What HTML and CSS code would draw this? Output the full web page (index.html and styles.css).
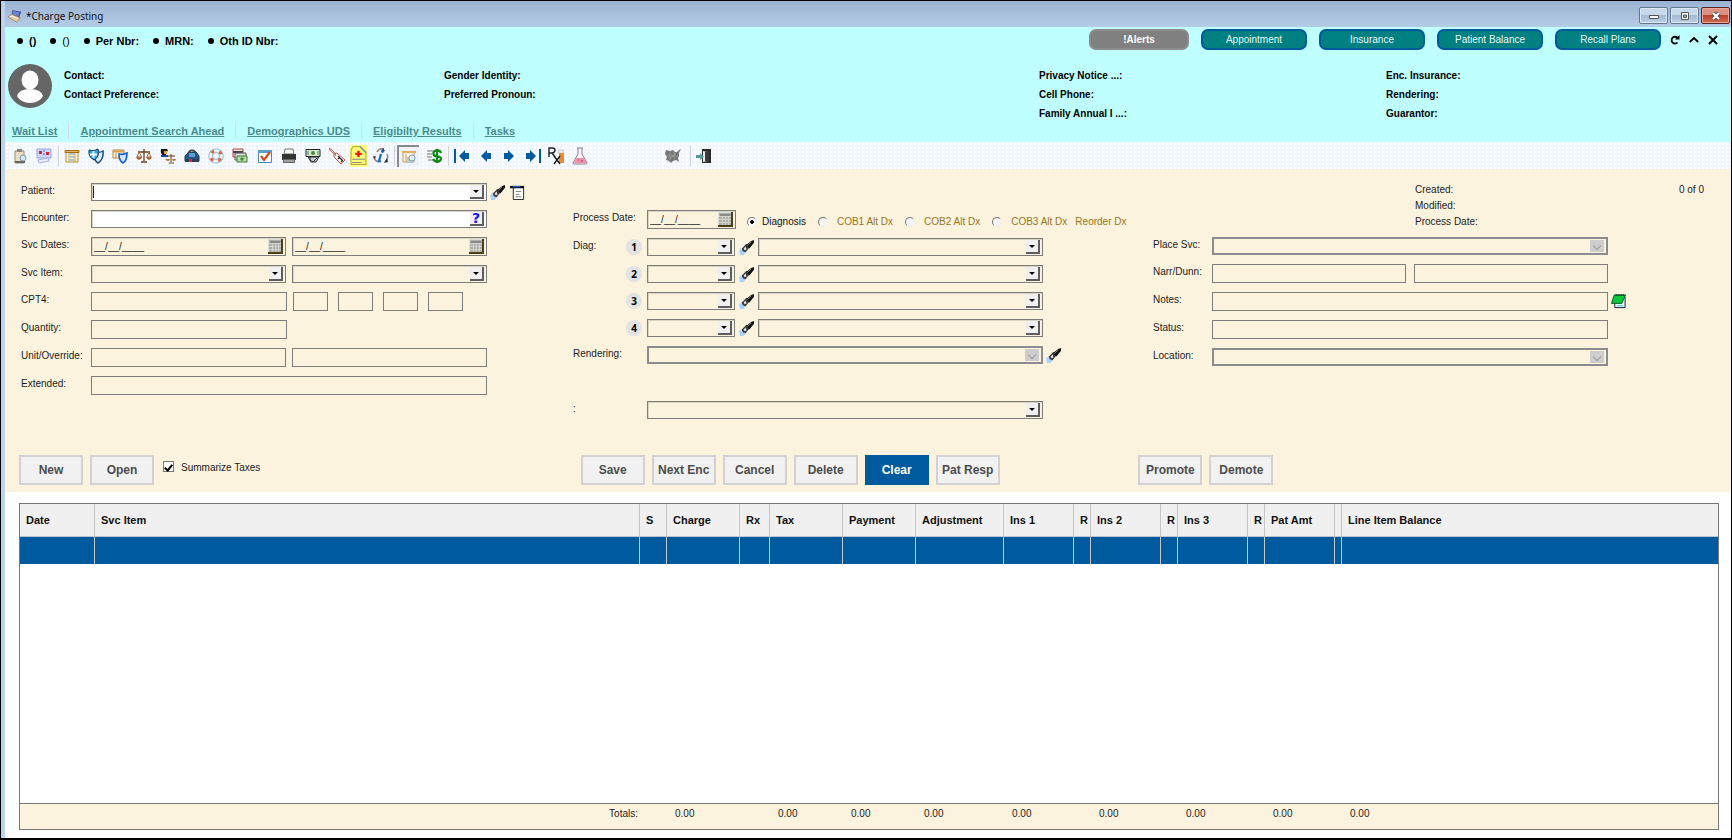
FILE: index.html
```html
<!DOCTYPE html>
<html lang="en">
<head>
<meta charset="utf-8">
<title>Charge Posting</title>
<link rel="stylesheet" href="styles.css">
</head>
<body>
<svg class="sprite" aria-hidden="true">
  <symbol id="torch" viewBox="0 0 16 16"><path d="M0 11l4-3 4 4-3 4H1z" fill="#acd2fa"/><path d="M3 9l5-5 4 3-5 6-3-1z" fill="#3a3a3a"/><path d="M5 9l2-2 1 3-2 1z" fill="#e8e8e8"/><path d="M8 5l5-4 3-1v3l-5 6z" fill="#111"/><path d="M9 6l4-4" stroke="#888"/></symbol>
  <symbol id="calendar" viewBox="0 0 12 12"><path fill="#b0b0aa" d="M0 0h12v12H0z"/><path fill="#8a8a86" d="M1 1h10v2H1z"/><path fill="none" stroke="#d8d8d2" stroke-width=".8" d="M0 3.500h12M0 6.500h12M0 9.500h12M3.500 3v9M6.500 3v9M9.500 3v9"/></symbol>
</svg>
<div class="window">
  <header class="titlebar">
    <svg class="icon16" viewBox="0 0 16 16"><path d="M5 1l10 2-2 6-9-1z" fill="#3f4f9c"/><path d="M6 2l7 2-1 4-7-1z" fill="#6f86c8"/><path d="M0 9l4-3 10 4-4 5z" fill="#e7c9a0" stroke="#8a6a50" stroke-width=".7"/><path d="M2 9l3-1 6 3" stroke="#fff" fill="none"/></svg>
    <h1 class="title">*Charge Posting</h1>
    <div class="window-buttons">
      <button class="winbtn" aria-label="Minimize"><svg viewBox="0 0 12 10"><path d="M1.500 4.500h9v3h-9z" fill="#fff" stroke="#555"/></svg></button>
      <button class="winbtn" aria-label="Restore"><svg viewBox="0 0 12 10"><path d="M2.500 1.500h7v7h-7z" fill="#fff" stroke="#555"/><path d="M4.500 4h3v2.500h-3z" fill="#9ab" stroke="#555"/></svg></button>
      <button class="winbtn close" aria-label="Close"><svg viewBox="0 0 12 10"><path d="M3 2l6 6M9 2L3 8" stroke="#444" stroke-width="4"/><path d="M3 2l6 6M9 2L3 8" stroke="#fff" stroke-width="2.400"/></svg></button>
    </div>
  </header>

  <section class="patient-banner">
    <div class="banner-top">
      <ul class="ids">
        <li>()</li><li class="plain">()</li><li>Per Nbr:</li><li>MRN:</li><li>Oth ID Nbr:</li>
      </ul>
      <div class="pills">
        <button class="pill alert">!Alerts</button>
        <button class="pill">Appointment</button>
        <button class="pill">Insurance</button>
        <button class="pill">Patient Balance</button>
        <button class="pill">Recall Plans</button>
      </div>
      <div class="banner-tools">
        <button class="bare" aria-label="Refresh"><svg viewBox="0 0 10 10"><path d="M7.500 7.500A3.400 3.400 0 1 1 7.500 2.800" fill="none" stroke="#000" stroke-width="1.800"/><path d="M9.500 0v4.600H5z"/></svg></button>
        <button class="bare" aria-label="Collapse"><svg viewBox="0 0 10 10"><path d="M.8 7L5 3l4.200 4" fill="none" stroke="#000" stroke-width="1.800"/></svg></button>
        <button class="bare" aria-label="Dismiss"><svg viewBox="0 0 10 10"><path d="M1 1l8 8M9 1L1 9" stroke="#000" stroke-width="2"/></svg></button>
      </div>
    </div>
    <div class="banner-info">
      <svg class="avatar" viewBox="0 0 44 44"><circle cx="22" cy="22" r="22" fill="#666"/><ellipse cx="22" cy="16" rx="8.500" ry="9.500" fill="#fff"/><path d="M9 32q2-7 13-7t13 7q-4 7-13 7T9 32z" fill="#fff"/></svg>
      <div class="facts"><span>Contact:</span><span>Contact Preference:</span></div>
      <div class="facts"><span>Gender Identity:</span><span>Preferred Pronoun:</span></div>
      <div class="facts"><span>Privacy Notice ...:</span><span>Cell Phone:</span><span>Family Annual I ...:</span></div>
      <div class="facts"><span>Enc. Insurance:</span><span>Rendering:</span><span>Guarantor:</span></div>
    </div>
    <nav class="links">
      <a href="#wait">Wait List</a><a href="#search">Appointment Search Ahead</a><a href="#uds">Demographics UDS</a><a href="#elig">Eligibilty Results</a><a href="#tasks">Tasks</a>
    </nav>
  </section>

  <div class="toolbar" role="toolbar" aria-label="Charge tools">
    <div class="tools pair">
      <button class="tool" aria-label="Clipboard"><svg viewBox="0 0 16 16"><path d="M3 3h9v12H3z" fill="#e9dfc8" stroke="#9b8a68"/><path d="M5 1h5v3H5z" fill="#888"/><path d="M3 14h10" stroke="#666" stroke-width="2"/><circle cx="11" cy="10" r="3" fill="#cfe9f2" stroke="#89a"/></svg></button>
      <button class="tool" aria-label="Schedule"><svg viewBox="0 0 16 16"><path d="M1 1h14v9H1z" fill="#cfd8fa" stroke="#92a4e4"/><path d="M3 3h3v3H3zM10 4h3v3h-3z" fill="#d3203c"/><path d="M7 3h2M7 6h2" stroke="#3568dc"/><path d="M2 12l10-2 1 3-10 2z" fill="#eef" stroke="#a8aee0"/></svg></button>
    </div>
    <span class="sep"></span>
    <div class="tools main">
      <button class="tool" aria-label="Chart"><svg viewBox="0 0 16 16"><path d="M2 4h12v10H2z" fill="#fff7df" stroke="#b58a3c"/><path d="M1 2.500h14v2H1z" fill="#e6b45a" stroke="#a66c1a"/><path d="M5 5v9M11 5v9" stroke="#c79a4a"/><path d="M6 6h4M6 9h4M6 12h4" stroke="#5590b8"/></svg></button>
      <button class="tool" aria-label="Coverage"><svg viewBox="0 0 16 16"><path d="M7 4q5 1 8-1 1 8-5 12-5-3-4-11z" fill="#dceeff" stroke="#174a80" stroke-width="1.500"/><path d="M1 2q5 2 9-1 2 8-4 11-6-3-5-10z" fill="#2aa6ee" stroke="#15365f"/><path d="M5.500 3v7M2 6.500h7" stroke="#fff" stroke-width="1.800"/></svg></button>
      <button class="tool" aria-label="Chart coverage"><svg viewBox="0 0 16 16"><path d="M1 2h11v8H1z" fill="#fff3d4" stroke="#b58a3c"/><path d="M1 2.500h11v2H1z" fill="#d9a048"/><path d="M4 5v5" stroke="#b58a3c"/><path d="M7 6q4 1 8-1 0 8-4 10-4-2-4-9z" fill="#cfe8ff" stroke="#1458d8" stroke-width="1.600"/></svg></button>
      <button class="tool" aria-label="Balance"><svg viewBox="0 0 16 16"><path d="M8 1v12M2 4h12M5 14h6" stroke="#6b3f16" stroke-width="1.300"/><path d="M3 4L1 9h5zM13 4l-2 5h4z" fill="none" stroke="#9a6b38"/><path d="M0 9h6q-1 3-3 3T0 9zM10 9h6q-1 3-3 3t-3-3z" fill="#a56b36"/></svg></button>
      <button class="tool" aria-label="Guarantor balance"><svg viewBox="0 0 16 16"><path d="M1 1h6l1 2-2 1v3H2q-2-3-1-6z" fill="#161616"/><path d="M4 3h3v3H4z" fill="#e0a040"/><path d="M1 7h7v2H1z" fill="#2740b8"/><path d="M11 6v8M7 8h8M9 15h5" stroke="#6b3f16"/><path d="M5 11h5q0 2-2 2t-3-2zM12 11h4q0 2-2 2t-2-2z" fill="#b07a3c"/></svg></button>
      <button class="tool" aria-label="Case"><svg viewBox="0 0 16 16"><path d="M4 5q4-6 8 0" fill="none" stroke="#444" stroke-width="1.500"/><path d="M1 13V8l4-4h7l3 4v5z" fill="#245789" stroke="#2b3442"/><path d="M5 5h6v4H5z" fill="#5aa0d0"/><path d="M1 11h14v3H1z" fill="#2c3f58"/><path d="M5 11h3v3H5z" fill="#e02828"/></svg></button>
      <button class="tool" aria-label="Help desk"><svg viewBox="0 0 16 16"><circle cx="8" cy="8" r="5.300" fill="none" stroke="#6bb4d6" stroke-width="4.600"/><circle cx="8" cy="8" r="5.300" fill="none" stroke="#f4f8fb" stroke-width="3"/><circle cx="8" cy="8" r="5.300" fill="none" stroke="#e8643c" stroke-width="3" stroke-dasharray="3 5.325" stroke-dashoffset="5.600"/></svg></button>
      <button class="tool" aria-label="Payments"><svg viewBox="0 0 16 16"><path d="M1 1h10v8H1z" fill="#f4dcd8" stroke="#b44"/><path d="M1 3h10v2H1z" fill="#444"/><path d="M3 5h11v7H3z" fill="#ddd" stroke="#555"/><path d="M5 8h10v6H5z" fill="#b6ddaa" stroke="#3c7a32"/><circle cx="10" cy="11" r="1.800" fill="#4a9040"/></svg></button>
      <button class="tool" aria-label="Tasks"><svg viewBox="0 0 16 16"><path d="M1.500 2.500h13v12h-13z" fill="#fff" stroke="#4b88b8"/><path d="M1 2h14v3H1z" fill="#58a0d2"/><path d="M4 8l3 4 6-8" fill="none" stroke="#d0481c" stroke-width="2.200"/></svg></button>
      <button class="tool" aria-label="Print"><svg viewBox="0 0 16 16"><path d="M4 1h8l1 5H3z" fill="#f4f4f4" stroke="#777"/><path d="M1 6h14v6H1z" fill="#333"/><path d="M2 11h12v4H2z" fill="#666"/><path d="M3 13h10" stroke="#ddd"/></svg></button>
      <button class="tool" aria-label="Bills"><svg viewBox="0 0 16 16"><path d="M1 1.500h14v7H1z" fill="#d7ead0" stroke="#222"/><circle cx="8" cy="5" r="2" fill="#498a42"/><path d="M3 3v4M13 3v4" stroke="#498a42"/><path d="M3 9h11l-3 5H6z" fill="#c8ccd0" stroke="#333"/><path d="M5 9v3l3 2 4-4" fill="none" stroke="#333"/></svg></button>
      <button class="tool" aria-label="Price tag"><svg viewBox="0 0 16 16"><path d="M5 6l3-1 8 7-4 4-7-7z" fill="#fff" stroke="#c8564c"/><path d="M7 8Q6 3 0 0q0 3 6 6" fill="none" stroke="#a8654a"/><path d="M9 8l4 4M9 11l2-2M12 14l2-2" stroke="#222" stroke-width="1.300"/></svg></button>
      <button class="tool yellow" aria-label="Medical note"><svg viewBox="0 0 16 19"><path d="M3 1h7l5 5v12H1V4z" fill="#fffb76" stroke="#b6ab38"/><path d="M9 1l6 6" stroke="#6f96b0"/><path d="M8 5v6M5 8h6" stroke="#e81818" stroke-width="2.200"/><path d="M2 13h12M2 16h9" stroke="#888"/></svg></button>
      <button class="tool" aria-label="Reference"><svg viewBox="0 0 16 16"><path d="M4 4Q6 0 11 1M14 6q2 5-2 8M1 8q0 5 5 6" fill="none" stroke="#888" stroke-width="1.500"/><path d="M10 0l2 3-4 1zM0 9l3-1-1 3zM11 15l4-1-1-4z" fill="#333"/><path d="M8 6l-2 7 2 .5" fill="none" stroke="#1d66bd" stroke-width="2.200"/><circle cx="9.500" cy="3.500" r="1.400" fill="#1d66bd"/></svg></button>
    </div>
    <span class="sep"></span>
    <div class="tools charge">
      <button class="tool pressed" aria-label="Charge view"><svg viewBox="0 0 16 16"><path d="M2 3h11v10H2z" fill="#fff7df" stroke="#c39b58"/><path d="M1 2h14v2H1z" fill="#e0ae62"/><path d="M5 5v8" stroke="#c39b58"/><path d="M6 8h6v6H6z" fill="#b6cad8"/><circle cx="11" cy="9" r="3" fill="#dff2fa" stroke="#7f9db4"/></svg></button>
      <button class="tool" aria-label="Money"><svg viewBox="0 0 16 16"><path d="M0 3h6M0 6h5M0 9h5M1 12h5" stroke="#777"/><path d="M14 5Q13 2 9.500 2.500T6.500 6q0 2 4 2.500T14 11q-1 3-4 2.500T6 11M10 1v14" fill="none" stroke="#0c8a14" stroke-width="2.300"/></svg></button>
    </div>
    <span class="sep"></span>
    <div class="tools travel">
      <button class="tool" aria-label="First"><svg viewBox="0 0 16 16"><path fill="#005a9e" d="M0 1h2v14H0zM15 5h-4V2L5 8l6 6v-3h4z"/></svg></button>
      <button class="tool" aria-label="Previous"><svg viewBox="0 0 16 16"><path fill="#005a9e" d="M13 5H9V2L3 8l6 6v-3h4z"/></svg></button>
      <button class="tool" aria-label="Next"><svg viewBox="0 0 16 16"><path fill="#005a9e" d="M3 5h4V2l6 6-6 6v-3H3z"/></svg></button>
      <button class="tool" aria-label="Last"><svg viewBox="0 0 16 16"><path fill="#005a9e" d="M14 1h2v14h-2zM1 5h4V2l6 6-6 6v-3H1z"/></svg></button>
      <button class="tool" aria-label="Prescriptions"><svg viewBox="0 0 16 18"><path d="M11 5h5v11h-5z" fill="#e88a34"/><path d="M10 3h6v3h-6z" fill="#f2eee6" stroke="#aaa" stroke-width=".5"/><path d="M1 10V1h3.500q2.500 0 2.500 2.300T4.500 6H1M4 6l3 4" fill="none" stroke="#222" stroke-width="1.400"/><path d="M6 9l6 8M12 9l-6 8" stroke="#111" stroke-width="1.300"/></svg></button>
      <button class="tool" aria-label="Lab"><svg viewBox="0 0 16 18"><path d="M5 1h6M6 1v6L1 16q0 1 1 1h12q1 0 1-1L10 7V1" fill="#f8f4f8" stroke="#8c8088"/><path d="M4.500 11h7l3 5H2z" fill="#f08cac"/><path d="M6 13h1M9 14h2" stroke="#c2386c"/></svg></button>
    </div>
    <div class="tools map">
      <button class="tool" aria-label="Map"><svg viewBox="0 0 16 16"><path d="M1 2l4 1 3-1 2 2 2 0 4-3-2 4 0 3-1 2 1 4-3-2-3 1-2 2-2-2-3-1 1-3-2-3z" fill="#777"/><path d="M2 14L15 1M1 8h12M5 3v9M9 3v9" stroke="#aaa" stroke-width=".6"/></svg></button>
    </div>
    <span class="sep"></span>
    <button class="tool" aria-label="Exit"><svg viewBox="0 0 16 16"><path d="M6 1h9v14H6z" fill="#2b2b2b"/><path d="M7 3l5 1v9l-5 1z" fill="#eee"/><path d="M9 4l4-2v12l-4-1z" fill="#3a3a3a"/><path d="M0 7h4V5l4 3.500L4 12v-2H0z" fill="#5c9a9c"/></svg></button>
  </div>

  <main class="charge-form">
    <div class="form-grid">
      <div class="col left">
        <div class="row"><label class="lbl" for="patient">Patient:</label>
          <div class="fields"><div class="combo white"><i class="caret"></i><input id="patient" type="text"><button class="drop" aria-label="Open patient list"></button></div></div>
          <button class="bare side" aria-label="Find patient"><svg><use href="#torch"/></svg></button>
          <button class="bare side note" aria-label="Patient menu"><svg viewBox="0 0 16 16"><path d="M3.500 1.500h11v14h-11z" fill="#fff" stroke="#222"/><path d="M0 1h15v2.500H0z" fill="#111"/><path d="M3 1h8v1.500H3z" fill="#1d54c8"/><path d="M6 7h6M6 10h4M6 12.500h6" stroke="#777"/></svg></button></div>
        <div class="row"><label class="lbl" for="enc">Encounter:</label>
          <div class="fields"><div class="combo white"><input id="enc" type="text"><button class="drop ask">?</button></div></div></div>
        <div class="row"><label class="lbl" for="d1">Svc Dates:</label>
          <div class="fields"><div class="combo date"><input id="d1" type="text" value="__/__/____"><button class="cal" aria-label="Pick start"><svg><use href="#calendar"/></svg></button></div>
          <div class="combo date"><input type="text" aria-label="End date" value="__/__/____"><button class="cal" aria-label="Pick end"><svg><use href="#calendar"/></svg></button></div></div></div>
        <div class="row"><label class="lbl" for="item">Svc Item:</label>
          <div class="fields"><div class="combo"><select id="item"><option></option></select><i class="drop"></i></div><div class="combo"><select aria-label="Item description"><option></option></select><i class="drop"></i></div></div></div>
        <div class="row"><label class="lbl" for="cpt">CPT4:</label>
          <div class="fields"><input id="cpt" class="box" type="text"><div class="mods"><input class="box" aria-label="Modifier 1"><input class="box" aria-label="Modifier 2"><input class="box" aria-label="Modifier 3"><input class="box" aria-label="Modifier 4"></div></div></div>
        <div class="row"><label class="lbl" for="qty">Quantity:</label>
          <div class="fields"><input id="qty" class="box" type="text"><span class="blank"></span></div></div>
        <div class="row"><label class="lbl" for="unit">Unit/Override:</label>
          <div class="fields"><input id="unit" class="box" type="text"><input class="box" type="text" aria-label="Override"></div></div>
        <div class="row"><label class="lbl" for="ext">Extended:</label>
          <div class="fields"><input id="ext" class="box" type="text"></div></div>
      </div>

      <div class="col middle">
        <div class="row first"><label class="lbl" for="pd">Process Date:</label>
          <div class="combo date short"><input id="pd" type="text" value="__/__/____"><button class="cal" aria-label="Pick process date"><svg><use href="#calendar"/></svg></button></div>
          <div class="radios">
            <label class="on"><input type="radio" name="dx" checked>Diagnosis</label>
            <label><input type="radio" name="dx">COB1 Alt Dx</label>
            <label><input type="radio" name="dx">COB2 Alt Dx</label>
            <label><input type="radio" name="dx">COB3 Alt Dx</label>
            <span>Reorder Dx</span>
          </div></div>
        <div class="row"><label class="lbl" for="g1">Diag:</label><b class="num">1</b>
          <div class="fields diag"><div class="combo code"><select id="g1"><option></option></select><i class="drop"></i></div><button class="bare" aria-label="Find diagnosis 1"><svg><use href="#torch"/></svg></button><div class="combo"><select aria-label="Diagnosis 1"><option></option></select><i class="drop"></i></div></div></div>
        <div class="row"><span class="lbl"></span><b class="num">2</b>
          <div class="fields diag"><div class="combo code"><select aria-label="Code 2"><option></option></select><i class="drop"></i></div><button class="bare" aria-label="Find diagnosis 2"><svg><use href="#torch"/></svg></button><div class="combo"><select aria-label="Diagnosis 2"><option></option></select><i class="drop"></i></div></div></div>
        <div class="row"><span class="lbl"></span><b class="num">3</b>
          <div class="fields diag"><div class="combo code"><select aria-label="Code 3"><option></option></select><i class="drop"></i></div><button class="bare" aria-label="Find diagnosis 3"><svg><use href="#torch"/></svg></button><div class="combo"><select aria-label="Diagnosis 3"><option></option></select><i class="drop"></i></div></div></div>
        <div class="row"><span class="lbl"></span><b class="num">4</b>
          <div class="fields diag"><div class="combo code"><select aria-label="Code 4"><option></option></select><i class="drop"></i></div><button class="bare" aria-label="Find diagnosis 4"><svg><use href="#torch"/></svg></button><div class="combo"><select aria-label="Diagnosis 4"><option></option></select><i class="drop"></i></div></div></div>
        <div class="row"><label class="lbl" for="rend">Rendering:</label>
          <div class="fields"><div class="combo off"><select id="rend" disabled><option></option></select><i class="chev"></i></div></div><button class="bare side" aria-label="Find rendering"><svg><use href="#torch"/></svg></button></div>
        <div class="row extra"><label class="lbl" for="x">:</label>
          <div class="fields"><div class="combo"><select id="x"><option></option></select><i class="drop"></i></div></div></div>
      </div>

      <div class="col right">
        <div class="audit"><div class="stamps"><span>Created:</span><span>Modified:</span><span>Process Date:</span></div><span>0 of 0</span></div>
        <div class="row"><label class="lbl" for="pos">Place Svc:</label><div class="fields"><div class="combo off"><select id="pos" disabled><option></option></select><i class="chev"></i></div></div></div>
        <div class="row"><label class="lbl" for="nar">Narr/Dunn:</label><div class="fields wide"><input id="nar" class="box" type="text"><input class="box" type="text" aria-label="Dunning"></div></div>
        <div class="row"><label class="lbl" for="notes">Notes:</label><div class="fields"><input id="notes" class="box" type="text"></div>
          <button class="bare side" aria-label="Open notes"><svg viewBox="0 0 16 16"><path d="M4 3h11v11.500H4z" fill="#e8fbff" stroke="#113"/><path d="M3.500 1h12l-4 9H.5z" fill="#08c840" stroke="#052"/><path d="M5 1h10" stroke="#111" stroke-width="1.500" stroke-dasharray="1 1"/><path d="M6 12.500h7" stroke="#4bb"/></svg></button></div>
        <div class="row"><label class="lbl" for="st">Status:</label><div class="fields"><input id="st" class="box" type="text"></div></div>
        <div class="row"><label class="lbl" for="loc">Location:</label><div class="fields"><div class="combo off"><select id="loc" disabled><option></option></select><i class="chev"></i></div></div></div>
      </div>
    </div>

    <div class="actions">
      <div class="group"><button class="btn">New</button><button class="btn">Open</button><label class="tick"><input type="checkbox" checked>Summarize Taxes</label></div>
      <div class="group"><button class="btn">Save</button><button class="btn">Next Enc</button><button class="btn">Cancel</button><button class="btn">Delete</button><button class="btn primary">Clear</button><button class="btn">Pat Resp</button></div>
      <div class="group"><button class="btn">Promote</button><button class="btn">Demote</button></div>
    </div>
  </main>

  <section class="ledger">
    <table>
      <colgroup><col class="w75"><col><col class="w27"><col class="w73"><col class="w30"><col class="w73"><col class="w73"><col class="w88"><col class="w70"><col class="w17"><col class="w70"><col class="w17"><col class="w70"><col class="w17"><col class="w70"><col class="w7"><col class="w376"></colgroup>
      <thead><tr><th>Date</th><th>Svc Item</th><th>S</th><th>Charge</th><th>Rx</th><th>Tax</th><th>Payment</th><th>Adjustment</th><th>Ins 1</th><th>R</th><th>Ins 2</th><th>R</th><th>Ins 3</th><th>R</th><th>Pat Amt</th><th></th><th>Line Item Balance</th></tr></thead>
      <tbody>
        <tr class="current"><td></td><td></td><td></td><td></td><td></td><td></td><td></td><td></td><td></td><td></td><td></td><td></td><td></td><td></td><td></td><td></td><td></td></tr>
        <tr class="filler"><td colspan="17"></td></tr>
      </tbody>
      <tfoot><tr><td></td><td class="totals">Totals:</td><td></td><td>0.00</td><td></td><td>0.00</td><td>0.00</td><td>0.00</td><td>0.00</td><td></td><td>0.00</td><td></td><td>0.00</td><td></td><td>0.00</td><td></td><td>0.00</td></tr></tfoot>
    </table>
  </section>
</div>
</body>
</html>
```
FILE: styles.css
```css
* { box-sizing: border-box; }
body {
  margin: 0;
  font: 10px/16px "Liberation Sans", Arial, sans-serif;
  color: #1c1c1c;
}
button, input, select { font: inherit; color: inherit; margin: 0; padding: 0; }
.sprite { display: none; }
.window {
  display: flex;
  flex-direction: column;
  min-height: 100vh;
  border: 1px solid #000;
  border-width: 1px 1px 2px;
  padding-left: 4px;
  background: #bdd2ec;
}

/* Title bar */
.titlebar {
  display: flex;
  align-items: center;
  gap: 4px;
  height: 26px;
  padding: 3px 1px 0 3px;
  background: linear-gradient(#9ab3d2, #b5cce6);
}
.icon16 { width: 14px; height: 14px; }
.title { flex: 1; margin: 0; font: 10px/16px "Noto Sans", "Open Sans", sans-serif; color: #111; }
.window-buttons { display: flex; gap: 2px; }
.winbtn {
  display: grid;
  place-items: center;
  width: 29px;
  height: 17px;
  border: 1px solid #66788f;
  border-radius: 2px;
  background: linear-gradient(#c8d9ec 45%, #a3bad3 50%, #bdd0e6);
  box-shadow: inset 0 0 0 1px #dbe7f4;
}
.winbtn svg { width: 12px; height: 10px; }
.winbtn.close { border-color: #5c2420; background: linear-gradient(#dc9183 45%, #bd3f28 50%, #d06c50); box-shadow: inset 0 0 0 1px #e6ab9f; }

/* Patient banner */
.patient-banner { background: #c0ffff; color: #000; height: 115px; }
.banner-top { display: flex; align-items: flex-start; height: 30px; }
.ids { display: flex; flex: 1; gap: 14px; margin: 6px 0 0 12px; padding: 0; list-style: none; font: bold 11px/16px "Liberation Sans", Arial, sans-serif; }
.ids li { display: flex; align-items: center; gap: 6px; }
.ids li::before { content: ""; width: 6px; height: 6px; border-radius: 50%; background: #000; }
.ids .plain { font-weight: normal; }
.pills { display: flex; gap: 12px; padding-top: 2px; }
.pill {
  width: 106px;
  height: 21px;
  border: 2px solid #00589c;
  border-radius: 7px;
  background: #008080;
  color: #e8f8f8;
}
.pill.alert { width: 100px; border-color: #8c8c8c; background: #808080; color: #fff; font-weight: bold; }
.banner-tools { display: flex; gap: 9px; padding: 8px 13px 0 9px; }
.bare { display: block; border: 0; background: none; line-height: 0; }
.banner-tools svg { width: 10px; height: 10px; }
.banner-info {
  display: grid;
  grid-template-columns: 56px 380fr 595fr 347fr 345fr;
  padding: 7px 0 0 3px;
  align-items: start;
  height: 66px;
  font-weight: bold;
}
.avatar { width: 44px; height: 44px; }
.facts { display: flex; flex-direction: column; gap: 3px; padding-top: 4px; }
.links { display: flex; padding: 0 7px; font: bold 11px/16px "Liberation Sans", Arial, sans-serif; }
.links a { color: #4a8a8c; }
.links a + a { margin-left: 11px; padding-left: 11px; border-left: 1px solid #d4dce4; }

/* Toolbar */
.toolbar {
  display: flex;
  align-items: center;
  height: 27px;
  padding-left: 4px;
  background-color: #f1f5fe;
  background-image: radial-gradient(#fff 1px, transparent 1px);
  background-size: 4px 4px;
}
.tools { display: flex; justify-content: space-between; align-items: center; }
.tool { display: grid; place-items: center; width: 22px; height: 22px; border: 0; background: none; }
.tool svg { width: 16px; height: 16px; }
.pair { width: 46px; margin-right: 1px; }
.main { width: 331px; }
.charge { width: 49px; }
.travel { width: 140px; }
.travel .tool:nth-child(n+5) svg { height: 18px; }
.map { margin: 0 4px 0 71px; }
.sep { width: 1px; height: 20px; margin: 0 2px; background: #cfd2d8; }
.tool.yellow { width: 18px; background: #fffb86; }
.tool.yellow svg { width: 17px; height: 21px; }
.tool.pressed { border: 2px solid #8a8a8a; border-right: 0; border-bottom: 0; background: #eef2fa; }

/* Charge form */
.charge-form { background: #fbf3dd; padding-bottom: 7px; }
.form-grid { display: grid; grid-template-columns: 552fr 580fr 578fr; padding-left: 16px; }
.col { display: flex; flex-direction: column; gap: 9px; min-width: 0; }
.left { padding: 14px 86px 0 0; }
.middle { padding: 41px 110px 36px 0; }
.right { padding: 13px 123px 0 0; }
.row { display: flex; align-items: center; position: relative; }
.lbl { width: 70px; flex: none; margin-bottom: 3px; line-height: 14px; white-space: nowrap; }
.middle .lbl { width: 74px; }
.right .lbl { width: 59px; }
.fields { display: flex; flex: 1; gap: 6px; min-width: 0; }
.fields.wide { gap: 8px; }
.combo {
  display: flex;
  align-items: center;
  flex: 1;
  min-width: 0;
  height: 18px;
  position: relative;
  padding-right: 2px;
  border: 1px solid #7d7d7d;
  box-shadow: inset 1px 1px 0 #d9d3c2;
}
.combo.white { background: #fff; }
.combo.date { height: 19px; }
.combo.short { flex: none; width: 89px; }
.combo input, .combo select { flex: 1; min-width: 0; width: 100%; height: 16px; border: 0; outline: 0; background: none; appearance: none; padding-left: 2px; }
.combo select + i { position: absolute; right: 2px; pointer-events: none; }
.caret { width: 1px; height: 12px; margin-left: 1px; background: #222; }
.drop {
  display: grid;
  place-items: center;
  width: 14px;
  height: 14px;
  border: solid;
  border-width: 0 2px 2px 0;
  border-color: #5e5e5e;
  background: #f0f0f0;
}
.drop::after { content: ""; border: 3px solid transparent; border-top-color: #000; border-bottom: 0; }
.drop.ask { color: #1414f0; font: bold 14px/12px "DejaVu Sans", sans-serif; }
.drop.ask::after { display: none; }
.cal { width: 15px; height: 15px; border: solid #4a4018; border-width: 0 2px 2px 0; background: #ddd; line-height: 0; }
.cal svg { width: 12px; height: 12px; }
.combo.off { border: 2px solid #8c8c90; box-shadow: none; }
.chev { display: grid; place-items: center; width: 14px; height: 12px; background: #cdcdcd; }
.chev::after { content: ""; width: 5px; height: 5px; border: solid #9c9c9c; border-width: 0 1px 1px 0; transform: rotate(45deg); }
.box { flex: 1; min-width: 0; height: 19px; border: 1px solid #7d7d7d; outline: 0; background: none; }
.mods { display: flex; flex: 1; gap: 10px; min-width: 0; }
.mods .box { flex: 0 1 35px; }
.blank { flex: 1; }
.row .bare svg { width: 15px; height: 15px; }
.side { position: absolute; left: 100%; margin-left: 3px; }
.side.note { margin-left: 23px; }
.num {
  position: absolute;
  left: 53px;
  width: 16px;
  height: 16px;
  border-radius: 50%;
  background: #e3e3e3;
  color: #000;
  font: bold 10px/16px "Noto Sans", sans-serif;
  text-align: center;
}
.diag { gap: 4px; }
.combo.code { flex: none; width: 88px; }
.radios { display: flex; gap: 12px; position: absolute; left: 174px; top: 5px; white-space: nowrap; line-height: 14px; color: #96751c; }
.radios label { display: flex; align-items: center; gap: 9px; }
.radios .on { color: #111; gap: 5px; }
.radios span { margin-left: -4px; }
.radios input {
  width: 10px;
  height: 10px;
  appearance: none;
  border: 1px solid;
  border-color: #777 #eee #eee #777;
  border-radius: 50%;
  background: #f4f4f4;
}
.radios input:checked { background: radial-gradient(circle, #000 2px, #fff 2px); }
.extra { margin-top: 28px; }
.audit { display: flex; justify-content: space-between; height: 46px; margin: 0 -96px 0 262px; }
.stamps { display: flex; flex-direction: column; }

/* Actions */
.actions { display: grid; grid-template-columns: 562fr 558fr 593fr; padding-left: 14px; }
.group { display: flex; gap: 7px; }
.btn { width: 64px; height: 30px; border: 2px solid #d2d2d2; background: #f1f1f1; color: #4c4c4c; font: bold 12px/16px "Liberation Sans", Arial, sans-serif; white-space: nowrap; }
.btn.primary { border-color: #005a9e; background: #005a9e; color: #fff; }
.tick { display: flex; align-items: flex-start; gap: 7px; padding: 5px 2px; }
.tick input { width: 11px; height: 11px; margin-top: 1px; appearance: none; border: 1px solid #777; background: #fff; display: grid; place-items: center; }
.tick input:checked::after { content: ""; width: 3px; height: 6px; border: solid #000; border-width: 0 2px 2px 0; transform: rotate(40deg); }

/* Ledger */
.ledger { flex: 1; display: grid; padding: 11px 12px 8px 14px; background: #fff; }
.ledger table { width: 100%; height: 100%; table-layout: fixed; border-collapse: separate; border-spacing: 0; border: 1px solid #777; }
.ledger th, .ledger td { padding: 0 0 0 6px; border-right: 1px solid #c6c6c6; text-align: left; white-space: nowrap; }
.ledger th:last-child, .ledger td:last-child { border-right: 0; }
.ledger th { height: 33px; background: #f0f0f0; color: #111; font: bold 11px/16px "Liberation Sans", Arial, sans-serif; border-bottom: 1px solid #b9c4cf; }
.ledger .current td { height: 27px; background: #005a9e; }
.ledger tfoot td { height: 26px; padding: 0 0 6px 8px; border-right: 0; border-top: 1px solid #777; background: #fbf3dd; }
.ledger tfoot .totals { padding: 0 2px 6px 0; text-align: right; }
.w7 { width: 7px; }
.w17 { width: 17px; }
.w27 { width: 27px; }
.w30 { width: 30px; }
.w70 { width: 70px; }
.w73 { width: 73px; }
.w75 { width: 75px; }
.w88 { width: 88px; }
.w376 { width: 376px; }
```
